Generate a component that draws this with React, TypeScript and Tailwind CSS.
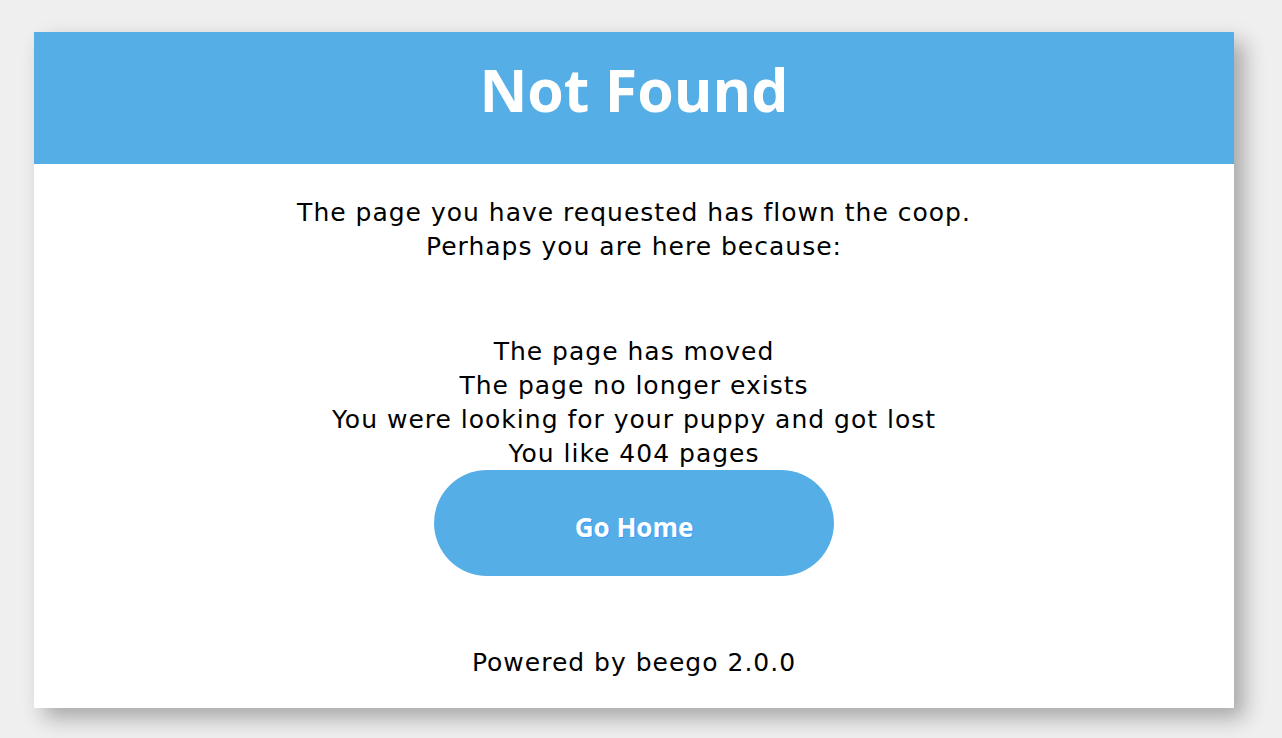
export default function App() {
  const reasons = [
    'The page has moved',
    'The page no longer exists',
    'You were looking for your puppy and got lost',
    'You like 404 pages',
  ];

  return (
    <div className="min-h-screen bg-[#efefef] pt-[32px] font-['DejaVu_Sans',sans-serif]">
      <div className="ml-[34px] w-[1200px] bg-white text-center shadow-[10px_10px_20px_rgba(0,0,0,0.3)]">
        <div className="bg-[#56aee6] pt-[28px] pb-[46px]">
          <h1 className="font-['Open_Sans',sans-serif] text-[59px] leading-[58px] font-bold text-white">Not Found</h1>
        </div>

        <div className="pt-[32px] pb-[28px] text-[25px] leading-[34px] tracking-[1px] text-black">
          <p>
            The page you have requested has flown the coop.
            <br />
            Perhaps you are here because:
          </p>
          <ul className="mt-[71px]">
            {reasons.map((r) => (
              <li key={r}>{r}</li>
            ))}
          </ul>
          <a
            href="/"
            className="mx-auto -mt-[1px] flex h-[106px] w-[400px] items-center justify-center rounded-full bg-[#56aee6] font-['Open_Sans',sans-serif] text-[26px] font-bold tracking-normal text-white [text-shadow:1px_1px_0_#3a9bff]"
          >
            <span className="pt-[8px]">Go Home</span>
          </a>
          <p className="mt-[70px]">Powered by beego 2.0.0</p>
        </div>
      </div>
    </div>
  );
}
